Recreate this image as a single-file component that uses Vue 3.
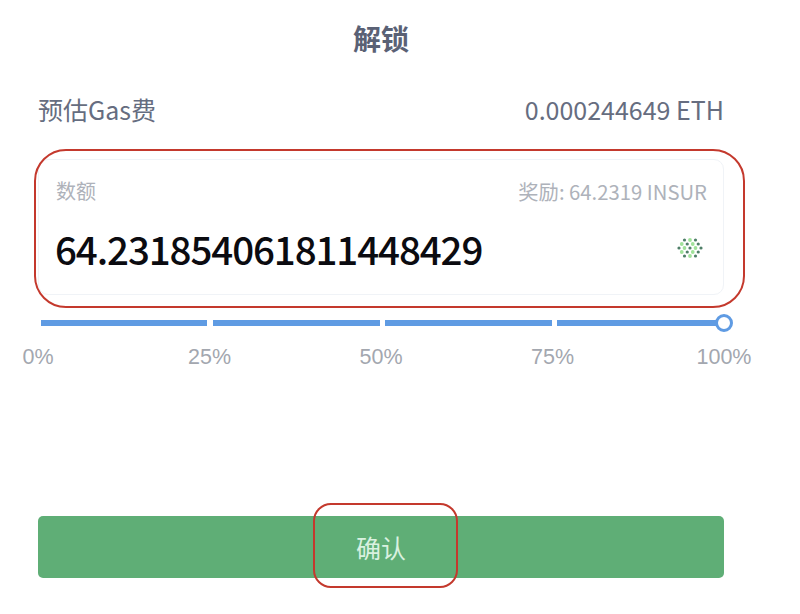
<template>
  <div class="unlock-page">
    <h1 class="title">解锁</h1>
    <div class="gas-row">
      <span>预估Gas费</span>
      <span>0.000244649 ETH</span>
    </div>

    <div class="amount-card">
      <div class="amount-head">
        <span>数额</span>
        <span class="reward">奖励: 64.2319 INSUR</span>
      </div>
      <div class="amount-body">
        <span class="amount-value">64.231854061811448429</span>
        <svg class="token-icon" width="28" height="22" viewBox="0 0 28 22">
          <circle v-for="(d, i) in tokenDots" :key="i" :cx="d.x" :cy="d.y" :r="d.r" :fill="d.fill" />
        </svg>
      </div>
      <div class="note note-card"></div>
    </div>

    <div class="slider">
      <div class="track">
        <span v-for="n in 4" :key="n" class="segment"></span>
        <span class="knob"></span>
      </div>
      <div class="marks">
        <span v-for="m in marks" :key="m" class="mark"><span>{{ m }}</span></span>
      </div>
    </div>

    <button class="confirm">
      确认
      <span class="note note-button"></span>
    </button>
  </div>
</template>

<script setup>
const marks = ['0%', '25%', '50%', '75%', '100%']

// 代币图标: 菱形点阵
const tokenDots = []
for (let row = -2; row <= 2; row++) {
  const count = 5 - Math.abs(row)
  for (let c = 0; c < count; c++) {
    const dark = (row + c) % 2 === 0
    tokenDots.push({
      x: 14 + (c - (count - 1) / 2) * 5.5,
      y: 11 + row * 4,
      r: dark ? 1.6 : 1.9,
      fill: dark ? '#4f7f68' : '#a0e29a'
    })
  }
}
</script>

<style scoped>
.unlock-page {
  width: 800px;
  height: 614px;
  box-sizing: border-box;
  padding: 0 76px 0 38px;
  display: flex;
  flex-direction: column;
  font-family: "Noto Sans CJK SC", "Noto Sans", sans-serif;
  background: #fff;
  overflow: hidden;
}

.title {
  margin: 18px 0 0;
  height: 40px;
  line-height: 40px;
  font-size: 28px;
  font-weight: 700;
  color: #5a6175;
  text-align: center;
}

.gas-row {
  margin-top: 31px;
  height: 40px;
  line-height: 40px;
  display: flex;
  justify-content: space-between;
  font-size: 25px;
  color: #666d80;
}

.amount-card {
  position: relative;
  margin-top: 30px;
  height: 136px;
  box-sizing: border-box;
  padding: 16px 16px 0 17px;
  border: 1px solid #f0f3f7;
  border-radius: 10px;
}

.amount-head {
  display: flex;
  justify-content: space-between;
  height: 30px;
  line-height: 30px;
  font-size: 20px;
  color: #aeb2ba;
}

.reward {
  font-size: 20.3px;
}

.amount-body {
  margin-top: 13px;
  display: flex;
  justify-content: space-between;
  align-items: center;
  height: 58px;
}

.amount-value {
  margin-left: -1px;
  font-size: 38.5px;
  font-weight: 500;
  letter-spacing: -1.1px;
  color: #0b0b10;
}

.token-icon {
  margin-right: 3px;
}

.slider {
  margin-top: 25px;
  padding-left: 2.5px;
}

.track {
  position: relative;
  display: flex;
  gap: 5.5px;
  height: 6px;
}

.segment {
  flex: 1;
  background: #5f9be3;
}

.knob {
  position: absolute;
  right: -9px;
  top: -6px;
  width: 18px;
  height: 18px;
  box-sizing: border-box;
  border: 3px solid #5f9be3;
  border-radius: 50%;
  background: #fff;
}

.marks {
  margin: 19px 0 0 -2.5px;
  display: flex;
  justify-content: space-between;
  font-family: "Liberation Sans", Arial, sans-serif;
  font-size: 21.5px;
  line-height: 24px;
  color: #a3a7af;
}

.mark {
  width: 0;
  display: flex;
  justify-content: center;
  white-space: nowrap;
}

.confirm {
  position: relative;
  margin-top: 147px;
  height: 62px;
  padding: 0;
  border: none;
  border-radius: 5px;
  background: #5fae76;
  color: #d9f1e0;
  font: inherit;
  font-size: 25px;
}

.note {
  position: absolute;
  box-sizing: border-box;
  border: 2.5px solid #c4392d;
  pointer-events: none;
}

.note-card {
  left: -5px;
  top: -11px;
  width: 711px;
  height: 159px;
  border-radius: 32px;
}

.note-button {
  left: 275px;
  top: -13px;
  width: 145px;
  height: 85px;
  border-radius: 18px;
}
</style>
